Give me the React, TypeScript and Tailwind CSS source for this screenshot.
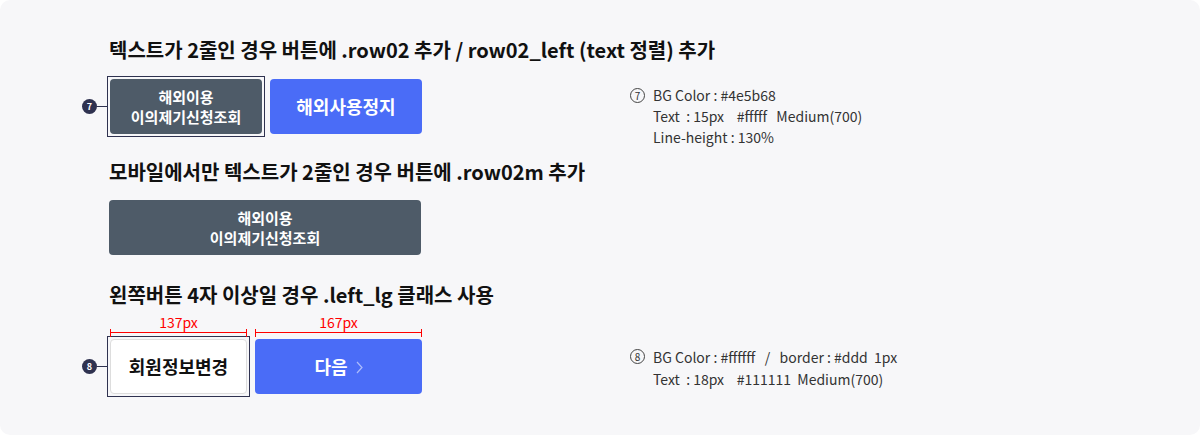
const kr = { fontFamily: '"Noto Sans CJK KR", "Noto Sans", sans-serif' };

function Badge({ n }: { n: number }) {
  return (
    <div className="flex items-center shrink-0">
      <span className="flex h-[15px] w-[15px] items-center justify-center rounded-full bg-[#2f3250] text-[9px] font-bold leading-none text-white">
        {n}
      </span>
      <span className="h-px w-[10px] bg-[#2f3250]" />
    </div>
  );
}

function NoteNum({ n }: { n: number }) {
  return (
    <span className="mr-[8px] mt-[3px] flex h-[15px] w-[15px] shrink-0 items-center justify-center rounded-full border border-[#444] text-[10px] leading-none text-[#333]">
      {n}
    </span>
  );
}

function Dim({ width, label }: { width: number; label: string }) {
  return (
    <div style={{ width }} className="flex flex-col items-center">
      <span className="text-[14px] leading-[14px] text-[#ff0000]">{label}</span>
      <div className="relative h-[8px] w-full border-x border-[#ff0000]">
        <div className="absolute left-0 right-0 top-[3px] h-px bg-[#ff0000]" />
      </div>
    </div>
  );
}

export default function App() {
  return (
    <div className="h-[435px] w-[1200px] bg-white" style={kr}>
      <div className="h-full w-full rounded-[10px] bg-[#f7f7f9] pl-[109px] pt-[36px]">
        {/* row02 */}
        <h2 className="text-[20px] font-bold leading-[28px] text-[#111]">
          텍스트가 2줄인 경우 버튼에 .row02 추가 / row02_left (text 정렬) 추가
        </h2>
        <div className="-ml-[27px] mt-[12px] flex h-[61px] items-start">
          <div className="flex w-[548px] items-center">
            <Badge n={7} />
            <div className="border border-[#2f3250] p-[2px]">
              <button className="flex h-[55px] w-[152px] flex-col items-center justify-center rounded-[4px] bg-[#4e5b68] text-[15px] font-bold leading-[130%] text-white">
                <span>해외이용</span>
                <span>이의제기신청조회</span>
              </button>
            </div>
            <button className="ml-[5px] h-[55px] w-[152px] rounded-[4px] bg-[#4a6cf7] text-[18px] font-bold text-white">
              해외사용정지
            </button>
          </div>
          <div className="mt-[9px] flex text-[14px] leading-[21px] text-[#333]">
            <NoteNum n={7} />
            <div className="whitespace-pre">
              <p>BG Color : #4e5b68</p>
              <p>Text  : 15px    #fffff   Medium(700)</p>
              <p>Line-height : 130%</p>
            </div>
          </div>
        </div>

        {/* row02m */}
        <h2 className="mt-[21px] text-[20px] font-bold leading-[28px] text-[#111]">
          모바일에서만 텍스트가 2줄인 경우 버튼에 .row02m 추가
        </h2>
        <button className="mt-[14px] flex h-[55px] w-[312px] flex-col items-center justify-center rounded-[4px] bg-[#4e5b68] text-[15px] font-bold leading-[130%] text-white">
          <span>해외이용</span>
          <span>이의제기신청조회</span>
        </button>

        {/* left_lg */}
        <h2 className="mt-[26px] text-[20px] font-bold leading-[28px] text-[#111]">
          왼쪽버튼 4자 이상일 경우 .left_lg 클래스 사용
        </h2>
        <div className="ml-px mt-[6px] flex gap-[8px]">
          <Dim width={137} label="137px" />
          <Dim width={167} label="167px" />
        </div>
        <div className="-ml-[27px] -mt-px flex h-[63px] items-start">
          <div className="flex w-[548px] items-center">
            <Badge n={8} />
            <div className="border border-[#2f3250] p-[2px]">
              <button className="h-[55px] w-[137px] rounded-[4px] border border-[#ddd] bg-white text-[18px] font-bold text-[#111]">
                회원정보변경
              </button>
            </div>
            <button className="ml-[5px] flex h-[55px] w-[167px] items-center justify-center gap-[8px] rounded-[4px] bg-[#4a6cf7] text-[18px] font-bold text-white">
              <span>다음</span>
              <svg width="7" height="13" viewBox="0 0 7 13" fill="none" className="mt-[2px]">
                <path d="M1 1l5 5.5L1 12" stroke="rgba(255,255,255,0.55)" strokeWidth="1.2" />
              </svg>
            </button>
          </div>
          <div className="mt-[10px] flex text-[14px] leading-[22px] text-[#333]">
            <NoteNum n={8} />
            <div className="whitespace-pre">
              <p>BG Color : #ffffff   /   border : #ddd  1px</p>
              <p>Text  : 18px    #111111  Medium(700)</p>
            </div>
          </div>
        </div>
      </div>
    </div>
  );
}
